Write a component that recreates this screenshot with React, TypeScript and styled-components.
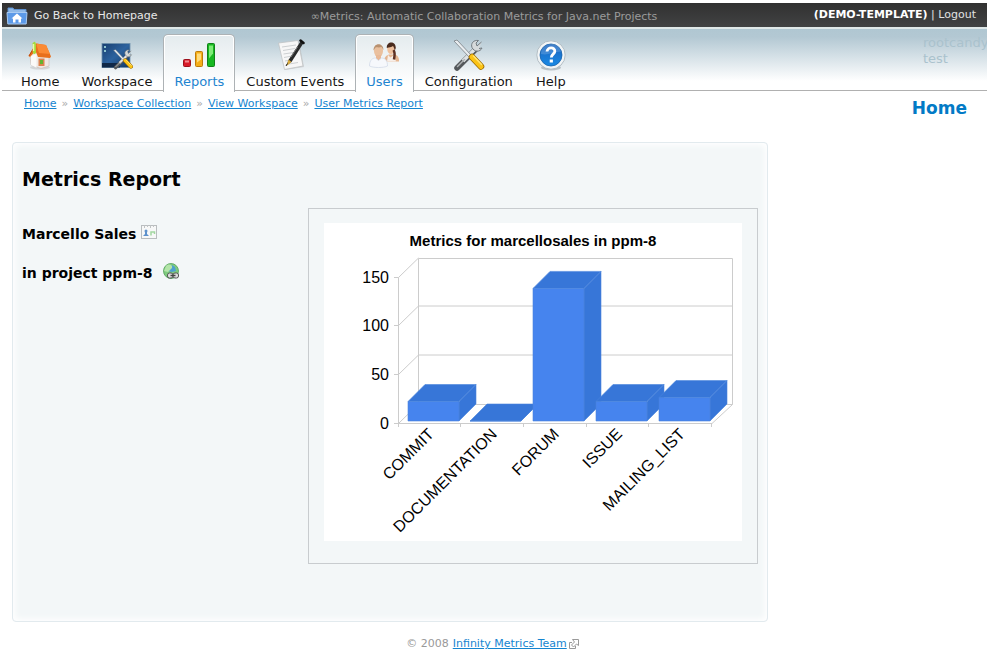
import React from "react";
import styled, { createGlobalStyle } from "styled-components";

const GlobalStyle = createGlobalStyle`
  * { box-sizing: border-box; }
  body {
    margin: 0;
    background: #fff;
    color: #000;
    font-family: Verdana, "DejaVu Sans", sans-serif;
    font-size: 11px;
    overflow-x: hidden;
  }
`;

const Page = styled.div`
  padding: 3px 0 0 2px;
`;

const TopBar = styled.div`
  display: grid;
  grid-template-columns: 1fr auto 1fr;
  align-items: center;
  height: 24px;
  padding: 0 11px 0 4px;
  color: #e2e2e2;
  background: linear-gradient(#313131, #414243);
`;

const HomepageLink = styled.a`
  display: flex;
  align-items: center;
  gap: 6px;
  padding-top: 2px;
  color: #e8e8e8;
  text-decoration: none;
  line-height: 20px;
`;

const Slogan = styled.span`
  color: #9b9b9b;
  padding: 3px 14px 0 0;
  line-height: 20px;
`;

const Account = styled.div`
  justify-self: end;
  line-height: 20px;
  strong { color: #fff; }
  a { color: #e2e2e2; text-decoration: none; }
`;

const NavBar = styled.header`
  display: flex;
  justify-content: space-between;
  height: 64px;
  margin-bottom: 5px;
  padding: 5px 0 0 8px;
  border-top: 2px solid #dfe8e8;
  border-bottom: 1px solid #b0b0b0;
  background: linear-gradient(#b0c7d2, #b3c8d3 8px, #ffffff 52px);
`;

const Tabs = styled.nav`
  display: flex;
`;

const Tab = styled.a<{ $active?: boolean }>`
  display: flex;
  flex-direction: column;
  align-items: center;
  height: 58px;
  padding: 4px 10px 0;
  border: 1px solid ${(p) => (p.$active ? "#adb2b5" : "transparent")};
  border-bottom: 0;
  border-radius: 5px 5px 0 0;
  background: ${(p) => (p.$active ? "linear-gradient(#e4ebee, #fff 50px)" : "transparent")};
  box-shadow: ${(p) => (p.$active ? "inset 0 0 0 1px #fff" : "none")};
  color: ${(p) => (p.$active ? "#1e84d0" : "#161616")};
  font-size: 13px;
  line-height: 21px;
  text-decoration: none;
  white-space: nowrap;
`;

const SiteName = styled.div`
  width: 64px;
  padding-top: 1px;
  color: #aac2cd;
  font-size: 13px;
  line-height: 16px;
`;

const SubBar = styled.div`
  display: flex;
  justify-content: space-between;
  height: 46px;
  padding: 0 20px 0 22px;
`;

const Crumbs = styled.nav`
  display: flex;
  gap: 5px;
  color: #aaa;
  line-height: 15px;
`;

const Link = styled.a`
  color: #1585d0;
`;

const PageTitle = styled.h1`
  margin: 2px 0 0;
  color: #027ac6;
  font-size: 17px;
  line-height: 20px;
`;

const Columns = styled.main`
  display: grid;
  grid-template-columns: minmax(0, 1fr) 219px;
  padding-left: 10px;
`;

const Panel = styled.section`
  padding: 24px 9px 57px;
  border: 1px solid #e2eaee;
  border-radius: 4px;
  background: #f3f7f8;
  box-shadow: inset 0 0 6px 2px #fff;
`;

const PanelTitle = styled.h2`
  margin: 0 0 16px;
  font-size: 19px;
  line-height: 25px;
`;

const Report = styled.div`
  display: flex;
  justify-content: space-between;
  align-items: flex-start;
`;

const Subject = styled.div`
  display: flex;
  flex-direction: column;
  gap: 19px;
  padding-top: 16px;
`;

const SubjectLine = styled.h3<{ $gap: number }>`
  display: flex;
  gap: ${(p) => p.$gap}px;
  margin: 0;
  font-size: 14px;
  line-height: 20px;
`;

const ChartFrame = styled.div`
  width: 450px;
  padding: 14px 15px 22px;
  border: 1px solid #c8cccf;
`;

const Footer = styled.footer`
  display: flex;
  justify-content: center;
  gap: 4px;
  padding: 14px 4px 0 0;
  color: #999;
  line-height: 16px;
`;

const FooterLink = styled.span`
  display: flex;
  align-items: center;
  gap: 2px;
`;

const FolderIcon = () => (
  <svg width="22" height="18" viewBox="0 0 22 18" aria-hidden="true">
    <path d="M2 2.5V1h5l1 1.5h12V7H2z" fill="#8fb9e8" stroke="#5c8fce" />
    <path d="M1 5.5h20l-.8 11.5H1.8z" fill="#5c9ae8" stroke="#a9cbf2" />
    <path d="M11 6.5l5.5 5H15v4h-2.5v-3h-3v3H7v-4H5.500z" fill="#fff" />
  </svg>
);

const HouseIcon = () => (
  <svg width="32" height="32" viewBox="0 0 32 32" aria-hidden="true">
    <ellipse cx="16" cy="28.500" rx="10" ry="2" fill="#bbb" opacity=".5" />
    <path d="M6 16l7-7 12 7v11l-8 2.500L7 26z" fill="#eee8e4" stroke="#c9bbb2" strokeWidth=".6" />
    <path d="M12.500 15v13.800L7 26v-9z" fill="#fbfaf8" />
    <path d="M12 4.500l10 1.500 5 11.500-1 1.500-12-1-2.500-6L6 18l-1.500-1z" fill="#e86f1c" />
    <path d="M12 4.500l10 1.500 4 9-11-1z" fill="#fb8a34" />
    <path d="M12 5L5 17" stroke="#bd4b10" />
    <rect x="14.500" y="19.500" width="6" height="7.500" fill="#dc824e" />
    <rect x="16" y="21" width="3" height="4" fill="#62b42f" />
    <path d="M8.500 4l2.500-1.500L12 5v9c-2 2.500-4 0-3-3z" fill="#a6d93c" />
    <path d="M9.500 5v7" stroke="#edf9a8" strokeWidth="1.500" />
  </svg>
);

const Tools = () => (
  <>
    <path d="M4 29L23 10" stroke="#54585b" strokeWidth="5.500" strokeLinecap="round" />
    <path d="M10 22L23 9" stroke="#dfe3e5" strokeWidth="3.500" />
    <path d="M4.500 27.500l7-7" stroke="#aeb2b4" strokeWidth="1.500" strokeLinecap="round" />
    <path d="M28.500 3l-4.500 4-1-3 2.500-2.500c-5-.8-8 3-6.500 7 2 4.500 8 5 10 .500l-3 .500" fill="#d6dadb" stroke="#737b80" />
    <path d="M1 2l3-1 15 16-2 2z" fill="#e9edf0" stroke="#787f84" strokeWidth=".8" />
    <path d="M19 18l9 9.500" stroke="#9b6a00" strokeWidth="6.500" strokeLinecap="round" />
    <path d="M19 18l9 9.500" stroke="#fbc315" strokeWidth="5" strokeLinecap="round" />
    <path d="M20.500 17l8 8.500" stroke="#ffe475" strokeWidth="1.500" strokeLinecap="round" />
  </>
);

const WorkspaceIcon = () => (
  <svg width="32" height="32" viewBox="0 0 32 32" aria-hidden="true">
    <defs>
      <linearGradient id="screen" x1="0" y1="0" x2="1" y2="1">
        <stop offset="0" stopColor="#183e70" />
        <stop offset=".5" stopColor="#2c629e" />
        <stop offset="1" stopColor="#123762" />
      </linearGradient>
    </defs>
    <rect x="1" y="4.500" width="28" height="24" fill="url(#screen)" stroke="#6d8fab" strokeWidth=".8" />
    <path d="M3 8h2M3 12h2" stroke="#8fc5cf" strokeWidth="2" />
    <path d="M1 24h18v4.500H1z" fill="#0f2848" />
    <g transform="translate(12 10) scale(.64)"><Tools /></g>
  </svg>
);

const BarsIcon = () => (
  <svg width="36" height="32" viewBox="0 0 36 32" aria-hidden="true">
    <rect x="2.500" y="20.500" width="7" height="7" rx="1" fill="#d71a29" stroke="#9c101c" />
    <path d="M4 22.500h4" stroke="#f18b91" strokeWidth="2" />
    <rect x="14.500" y="12.500" width="7" height="15" rx="1" fill="#f5ae19" stroke="#bd7b0b" />
    <path d="M16 14.500h4v6l-4 3z" fill="#ffdc7e" />
    <rect x="26.500" y="4.500" width="7" height="23" rx="1" fill="#17b821" stroke="#118019" />
    <path d="M28 6.500h4v8l-4 5z" fill="#7eec77" />
  </svg>
);

const NoteIcon = () => (
  <svg width="34" height="32" viewBox="2 0 34 32" aria-hidden="true">
    <path d="M4 5l19-3 5 26-19 3z" fill="#aaa" opacity=".4" />
    <path d="M2.500 4L22 1.500 27 27 8.500 30.500z" fill="#f7f7f7" stroke="#c0c3c4" strokeWidth=".8" />
    <path d="M6 8l14-2M7 11.500l12-2M7.500 15l10-1.500M8 18.500l8-1.500M9 22l5-1M10 25.500l12-2" stroke="#cdd0d2" />
    <path d="M10.500 26l2-5L24.500 2.500l3 1.500L15.500 23z" fill="#292a2a" />
    <path d="M12.500 20.500l3 2.500-5 4z" fill="#d8aa3c" />
    <path d="M10 27l1.500-2.500" stroke="#222" />
    <path d="M24.500 1.500l3 2.500" stroke="#111" strokeWidth="2.500" strokeLinecap="round" />
    <path d="M21.500 8l-6.500 10" stroke="#777" />
  </svg>
);

const PeopleIcon = () => (
  <svg width="32" height="32" viewBox="0 0 32 32" aria-hidden="true">
    <path d="M16 22.500c0-4 2-6 5-7h6c3 1 4 3 4 7z" fill="#e5b692" />
    <path d="M20 16l2.500 2.500L26 16l2 6.500h-9z" fill="#f7eee8" />
    <ellipse cx="23" cy="9.500" rx="3.800" ry="5.500" fill="#efc19e" />
    <path d="M18.800 9c-.5-7 9-7.500 9 0l-.8 2c-1-1-1-3-2-4-1.500 1.500-4 1-6.200 2z" fill="#4a2b1e" />
    <path d="M25.500 11c2 3 1 6 .5 9.500" stroke="#5d3023" strokeWidth="2.500" fill="none" />
    <ellipse cx="10.500" cy="12" rx="4.500" ry="6.300" fill="#eac09e" />
    <path d="M5.500 11.500c0-8.500 10-8 10-.5l-2-3c-3 1-4 0-6 .5z" fill="#b89170" />
    <path d="M8 16h5v5l-2 2-3-2z" fill="#e8b895" />
    <path d="M1.500 27c0-6 3-8 6-8l3 2.500 3-2.500c4 0 6 3 6 8-4 2-14 2-18 0z" fill="#f6f8fc" stroke="#d3dbe9" strokeWidth=".8" />
  </svg>
);

const ToolsIcon = () => (
  <svg width="32" height="32" viewBox="0 0 32 32" aria-hidden="true">
    <Tools />
  </svg>
);

const HelpIcon = () => (
  <svg width="32" height="32" viewBox="0 0 32 32" aria-hidden="true">
    <defs>
      <linearGradient id="disc" x1="0" y1="0" x2="0" y2="1">
        <stop offset="0" stopColor="#1b63bd" />
        <stop offset="1" stopColor="#198ae5" />
      </linearGradient>
    </defs>
    <ellipse cx="16" cy="28.500" rx="10" ry="3" fill="#9aa3a9" opacity=".6" />
    <circle cx="16" cy="16" r="14.200" fill="#f2f5f6" stroke="#b3bec5" />
    <circle cx="16" cy="16" r="11" fill="url(#disc)" stroke="#1761aa" strokeWidth=".8" />
    <path d="M6 15c0-12 18-14 20-2-7-1-12 4-20 2z" fill="#fff" opacity=".17" />
    <path d="M12 12.500c.3-5 8.300-4.500 7.800 0-.3 2.700-3.500 2.800-3.500 6" fill="none" stroke="#fff" strokeWidth="2.800" />
    <rect x="14.700" y="20.500" width="3.200" height="3" fill="#fff" />
  </svg>
);

const CardIcon = () => (
  <svg width="16" height="16" viewBox="0 0 16 16" aria-hidden="true">
    <rect x=".5" y="1.500" width="15" height="13" fill="#f7f8f8" stroke="#b9bdbf" />
    <path d="M3.500 1v3M6.500 1v2M9.500 1v3M12.500 1v2" stroke="#bfc3c4" />
    <circle cx="5" cy="7" r="1.500" fill="#5d91cc" />
    <path d="M4 8h2v2l2 2H2l2-2z" fill="#5d91cc" />
    <path d="M10 11.500V8h3.500v2" stroke="#a1d6a0" fill="none" strokeWidth="1.500" />
  </svg>
);

const GlobeIcon = () => (
  <svg width="16" height="16" viewBox="0 0 16 16" aria-hidden="true">
    <circle cx="8" cy="8" r="7.500" fill="#7ecb7e" stroke="#529e58" strokeWidth=".8" />
    <path d="M9 2l3 2 1 4-4 1-4-1 1-3z" fill="#4c9fd0" />
    <path d="M3 3c3-3 7-1 6 2L5 9 1 8z" fill="#b3e5a8" />
    <rect x="4.500" y="10" width="5.500" height="5" rx="2" fill="#ddd" stroke="#555" />
    <rect x="10" y="10" width="5.500" height="5" rx="2" fill="#ddd" stroke="#555" />
    <path d="M7.500 12.500h5" stroke="#444" strokeWidth="1.500" />
  </svg>
);

const ExternalIcon = () => (
  <svg width="10" height="11" viewBox="0 0 10 11" aria-hidden="true">
    <path d="M3 3.500H.5v6h6V7" fill="#fff" stroke="#999" />
    <path d="M3.500.5h6v6L7.500 5 4.500 8 2.500 6l3-3z" fill="#fff" stroke="#999" />
  </svg>
);

const tabs = [
  { label: "Home", icon: <HouseIcon /> },
  { label: "Workspace", icon: <WorkspaceIcon /> },
  { label: "Reports", icon: <BarsIcon />, active: true },
  { label: "Custom Events", icon: <NoteIcon /> },
  { label: "Users", icon: <PeopleIcon />, active: true },
  { label: "Configuration", icon: <ToolsIcon /> },
  { label: "Help", icon: <HelpIcon /> },
];

const crumbs = ["Home", "Workspace Collection", "View Workspace", "User Metrics Report"];

const metrics = [
  { name: "COMMIT", value: 20 },
  { name: "DOCUMENTATION", value: 0 },
  { name: "FORUM", value: 136 },
  { name: "ISSUE", value: 20 },
  { name: "MAILING_LIST", value: 24 },
];

const AxisText = styled.text`
  font-family: Arial, "Liberation Sans", sans-serif;
  font-size: 16px;
`;

const ChartTitle = styled.text`
  font-family: Arial, "Liberation Sans", sans-serif;
  font-size: 15px;
  font-weight: bold;
`;

const ChartSvg = styled.svg`
  display: block;
  width: 100%;
  background: #fff;
`;

const STEP = 62.7;
const DEPTH = 17;

const MetricsChart = () => (
  <ChartSvg viewBox="0 0 418 318" role="img" aria-label="Metrics for marcellosales in ppm-8">
    <ChartTitle x="209" y="23" textAnchor="middle">Metrics for marcellosales in ppm-8</ChartTitle>
    <g fill="none" stroke="#cccccc">
      <path d="M94.500 181V35.500H408.500V181.500H94.500M408.500 181.500L388 200.500" />
      <path d="M74.500 54.500V204M70 200.500H388" />
      {[0, 50, 100, 150].map((v) => {
        const y = 200.5 - Math.round(v * 0.975);
        return <path key={v} d={`M70 ${y}h4.500l20-19.500${v > 0 && v < 150 ? "H408" : ""}`} />;
      })}
      {metrics.map((m, i) => (
        <path key={m.name} d={`M${Math.round(74.5 + STEP * (i + 1)) - 0.5} 200v4`} />
      ))}
    </g>
    {[0, 50, 100, 150].map((v) => (
      <AxisText key={v} x="65" y={206 - Math.round(v * 0.975)} textAnchor="end">{v}</AxisText>
    ))}
    {metrics.map((m, i) => {
      const x = Math.round(84 + STEP * i - 0.3);
      const y = 198 - m.value * 0.975;
      const r = x + 51;
      return (
        <g key={m.name} stroke="#4a84dc" strokeWidth=".6">
          <path d={`M${x} ${y}l${DEPTH}-${DEPTH}h51l-${DEPTH} ${DEPTH}z`} fill="#3776d8" />
          <path d={`M${r} ${y}l${DEPTH}-${DEPTH}V${198 - DEPTH}L${r} 198z`} fill="#3776d8" />
          <path d={`M${x} ${y}H${r}V198H${x}z`} fill="#4684ee" />
        </g>
      );
    })}
    {metrics.map((m, i) => (
      <AxisText
        key={m.name}
        textAnchor="end"
        transform={`translate(${Math.round(111 + STEP * i)} 212) rotate(-45)`}
      >
        {m.name}
      </AxisText>
    ))}
  </ChartSvg>
);

export default function App() {
  return (
    <Page>
      <GlobalStyle />
      <TopBar>
        <HomepageLink href="#"><FolderIcon />Go Back to Homepage</HomepageLink>
        <Slogan>∞Metrics: Automatic Collaboration Metrics for Java.net Projects</Slogan>
        <Account><strong>(DEMO-TEMPLATE)</strong> | <a href="#">Logout</a></Account>
      </TopBar>
      <NavBar>
        <Tabs>
          {tabs.map((t) => (
            <Tab key={t.label} href="#" $active={t.active}>{t.icon}{t.label}</Tab>
          ))}
        </Tabs>
        <SiteName>rootcandy test</SiteName>
      </NavBar>
      <SubBar>
        <Crumbs aria-label="Breadcrumb">
          {crumbs.map((c, i) => (
            <React.Fragment key={c}>
              {i > 0 && <span>»</span>}
              <Link href="#">{c}</Link>
            </React.Fragment>
          ))}
        </Crumbs>
        <PageTitle>Home</PageTitle>
      </SubBar>
      <Columns>
        <Panel>
          <PanelTitle>Metrics Report</PanelTitle>
          <Report>
            <Subject>
              <SubjectLine $gap={5}>Marcello Sales <CardIcon /></SubjectLine>
              <SubjectLine $gap={10}>in project ppm-8 <GlobeIcon /></SubjectLine>
            </Subject>
            <ChartFrame><MetricsChart /></ChartFrame>
          </Report>
        </Panel>
      </Columns>
      <Footer>
        <span>© 2008</span>
        <FooterLink><Link href="#">Infinity Metrics Team</Link><ExternalIcon /></FooterLink>
      </Footer>
    </Page>
  );
}
